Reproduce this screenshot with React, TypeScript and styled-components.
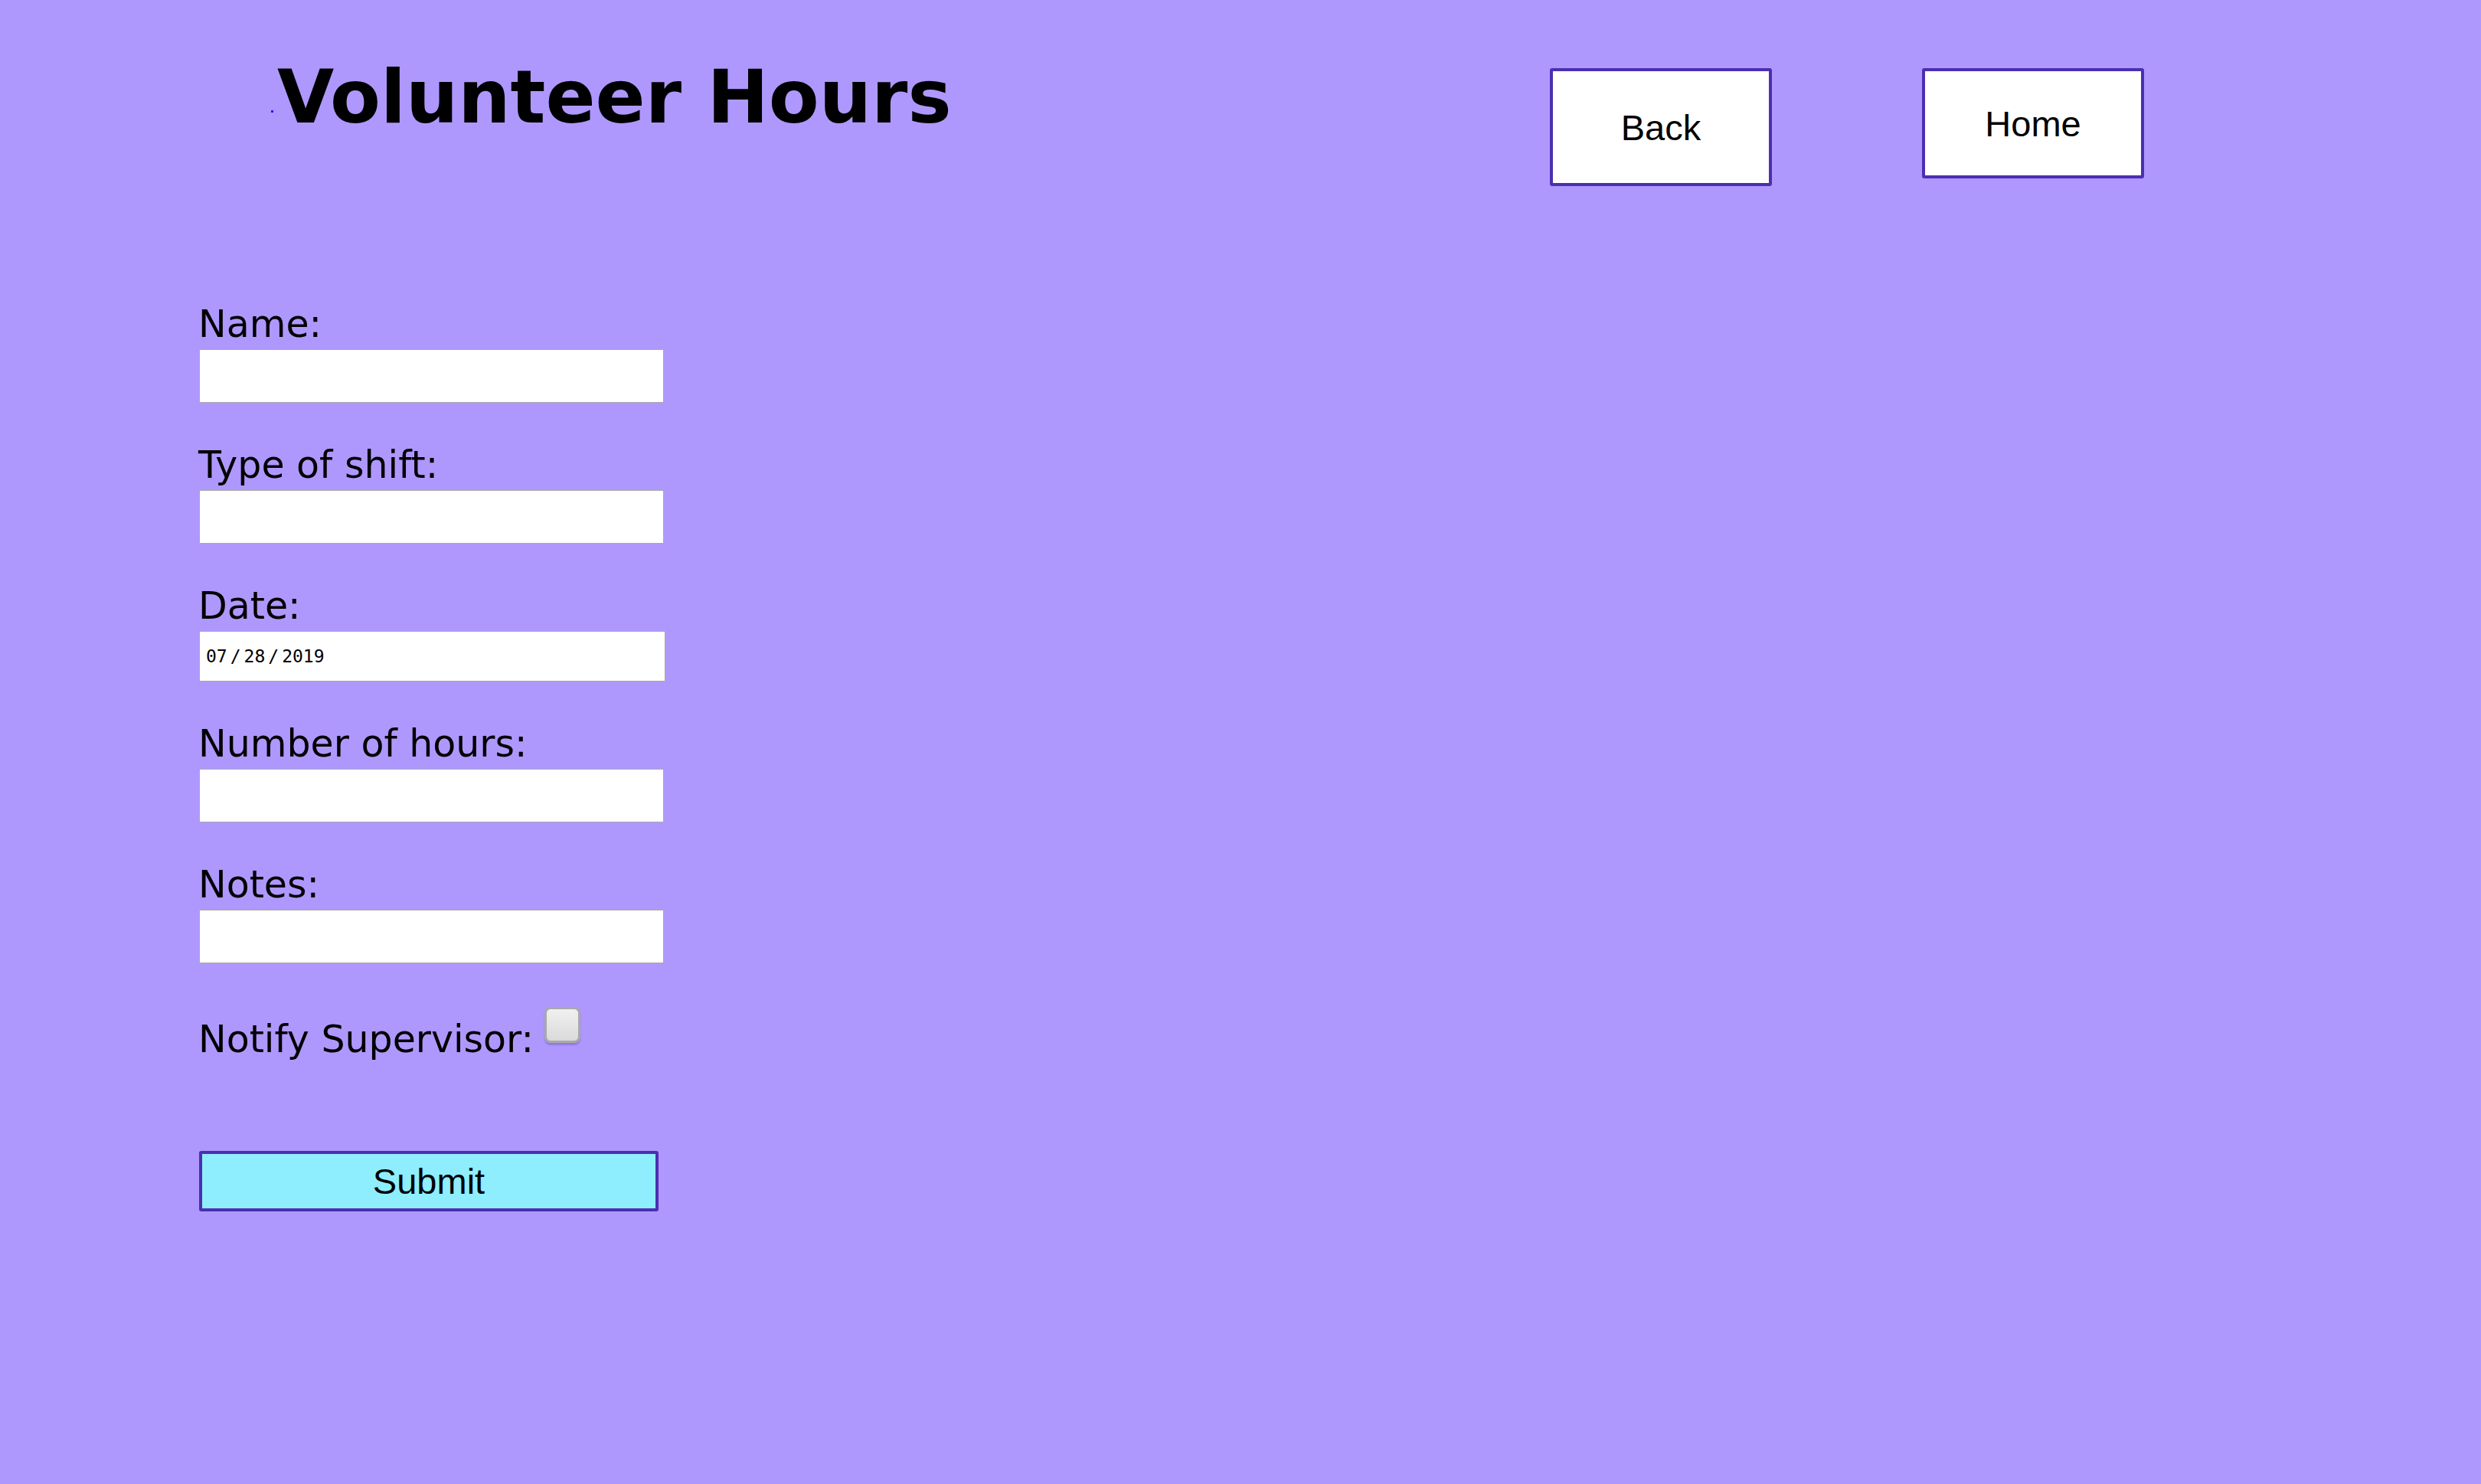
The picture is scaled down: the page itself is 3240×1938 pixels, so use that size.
import React from "react";
import styled, { createGlobalStyle } from "styled-components";

const GlobalStyle = createGlobalStyle`
  html, body {
    margin: 0;
    padding: 0;
    background: #af98fd;
  }
  body {
    min-height: 1938px;
    font-family: "DejaVu Sans", Verdana, sans-serif;
    color: #000;
  }
`;

const Page = styled.div`
  min-height: 1938px;
  background: #af98fd;
`;

const Header = styled.header`
  display: flex;
  align-items: flex-start;
  padding: 0 440px 0 354px;
`;

const Title = styled.h1`
  margin: 71px 0 0 0;
  font-family: "DejaVu Sans", Verdana, sans-serif;
  font-weight: bold;
  font-size: 96px;
  line-height: normal;
  white-space: nowrap;
`;

const Dot = styled.span`
  display: inline-block;
  width: 3px;
  height: 3px;
  background: #1a1aff;
  margin-right: 5px;
  vertical-align: 13px;
`;

const Nav = styled.nav`
  display: flex;
  align-items: flex-start;
  gap: 196px;
  margin: 89px 0 0 auto;
`;

const NavButton = styled.button<{ $h: number }>`
  box-sizing: border-box;
  width: 290px;
  height: ${(p) => p.$h}px;
  display: flex;
  align-items: center;
  justify-content: center;
  background: #ffffff;
  border: 4px solid #4b2fb0;
  border-radius: 3px;
  font-family: "Liberation Sans", Arial, sans-serif;
  font-size: 47px;
  color: #000;
  padding: 0;
  cursor: pointer;
`;

const Form = styled.form`
  display: flex;
  flex-direction: column;
  align-items: flex-start;
  gap: 53px;
  padding: 0 0 0 259px;
  margin-top: 152px;
`;

const Field = styled.div`
  display: flex;
  flex-direction: column;
  align-items: flex-start;
`;

const Label = styled.label`
  font-family: "DejaVu Sans", Verdana, sans-serif;
  font-size: 49px;
  line-height: normal;
`;

const TextInput = styled.input<{ $w?: number; $h?: number }>`
  box-sizing: border-box;
  width: ${(p) => p.$w ?? 607}px;
  height: ${(p) => p.$h ?? 70}px;
  margin: 4px 0 0 1px;
  background: #ffffff;
  border: 1px solid #a9a9a9;
  border-radius: 0;
  outline: none;
  padding: 0 6px;
  font-family: "DejaVu Sans", Verdana, sans-serif;
  font-size: 24px;
`;

const DateInput = styled(TextInput)`
  font-family: "DejaVu Sans Mono", "Liberation Mono", monospace;
  font-size: 23px;
  color: #000;
  padding: 0 0 0 7px;
  &::-webkit-datetime-edit-text {
    padding: 0 3px;
  }
  &::-webkit-calendar-picker-indicator {
    display: none;
  }
  &::-webkit-inner-spin-button {
    display: none;
  }
`;

const CheckRow = styled.div`
  display: flex;
  align-items: flex-start;
`;

const CheckText = styled.label`
  font-family: "DejaVu Sans", Verdana, sans-serif;
  font-size: 49px;
  line-height: normal;
  padding-top: 18px;
`;

const CheckBox = styled.input`
  appearance: none;
  -webkit-appearance: none;
  box-sizing: border-box;
  width: 47px;
  height: 47px;
  margin: 4px 0 0 14px;
  border: 3px solid #a9a9a9;
  border-radius: 8px;
  background: linear-gradient(#f0f0f0, #dadada);
  box-shadow: 0 3px 2px rgba(110, 85, 200, 0.45);
  cursor: pointer;
`;

const SubmitButton = styled.button`
  box-sizing: border-box;
  width: 600px;
  height: 79px;
  margin: 64px 0 0 1px;
  background: #8eeefd;
  border: 4px solid #4b2fb0;
  border-radius: 3px;
  font-family: "Liberation Sans", Arial, sans-serif;
  font-size: 47px;
  color: #000;
  padding: 0;
  cursor: pointer;
`;

export default function App() {
  return (
    <Page>
      <GlobalStyle />
      <Header>
        <Title>
          <Dot />
          Volunteer Hours
        </Title>
        <Nav>
          <NavButton $h={154} type="button">Back</NavButton>
          <NavButton $h={144} type="button">Home</NavButton>
        </Nav>
      </Header>
      <Form onSubmit={(e) => e.preventDefault()}>
        <Field>
          <Label htmlFor="name">Name:</Label>
          <TextInput id="name" type="text" />
        </Field>
        <Field>
          <Label htmlFor="shift">Type of shift:</Label>
          <TextInput id="shift" type="text" />
        </Field>
        <Field>
          <Label htmlFor="date">Date:</Label>
          <DateInput id="date" type="date" defaultValue="2019-07-28" $w={609} $h={66} />
        </Field>
        <Field>
          <Label htmlFor="hours">Number of hours:</Label>
          <TextInput id="hours" type="text" />
        </Field>
        <Field>
          <Label htmlFor="notes">Notes:</Label>
          <TextInput id="notes" type="text" />
        </Field>
        <CheckRow>
          <CheckText htmlFor="notify">Notify Supervisor:</CheckText>
          <CheckBox id="notify" type="checkbox" />
        </CheckRow>
        <SubmitButton type="submit">Submit</SubmitButton>
      </Form>
    </Page>
  );
}
